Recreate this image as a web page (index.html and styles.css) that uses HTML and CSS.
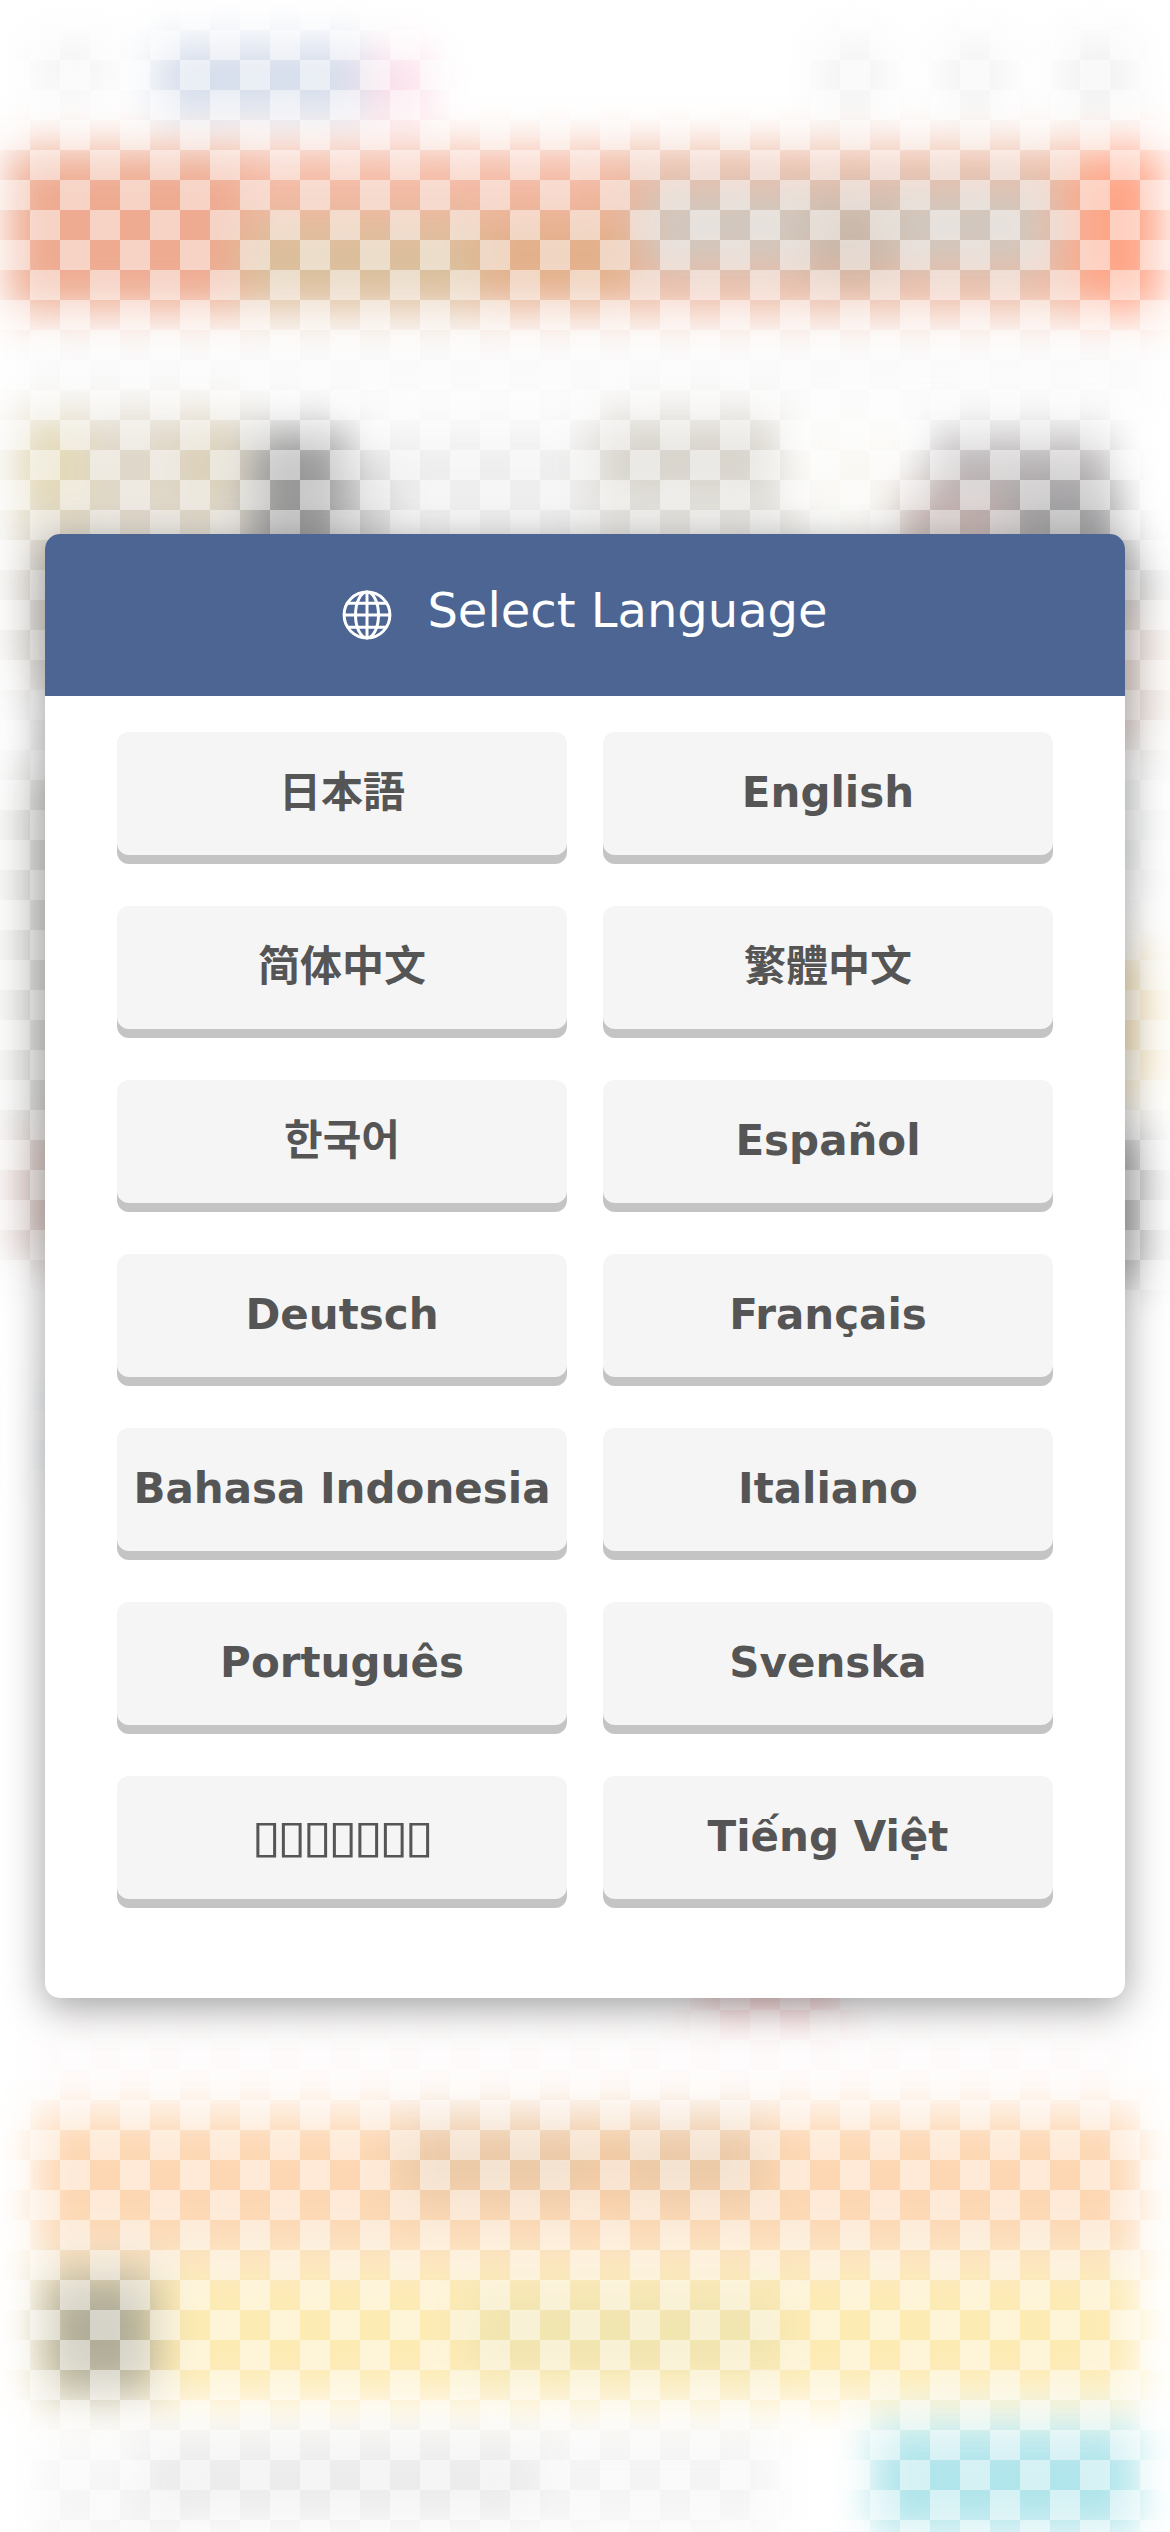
FILE: index.html
```html
<!DOCTYPE html>
<html lang="en">
<head>
<meta charset="utf-8">
<title>Select Language</title>
<link rel="stylesheet" href="styles.css">
</head>
<body>
<svg class="backdrop" viewBox="0 0 1170 2532" aria-hidden="true">
  <defs>
    <filter id="soft" filterUnits="userSpaceOnUse" x="-80" y="-80" width="1330" height="2692" color-interpolation-filters="sRGB"><feGaussianBlur stdDeviation="20 23"/></filter>
    <pattern id="check" width="60" height="60" patternUnits="userSpaceOnUse">
      <path d="M0 0h30v30H0zM30 30h30v30H30z" fill="#fff" fill-opacity=".47"/>
    </pattern>
  </defs>
  <rect width="1170" height="2532" fill="#fff"/>
  <g filter="url(#soft)">
    <!-- top bar -->
    <rect x="35" y="45" width="75" height="50" fill="#f2f2f2"/>
    <rect x="155" y="44" width="210" height="70" fill="#d3dbea"/>
    <rect x="365" y="54" width="65" height="62" fill="#fbdce8"/>
    <rect x="820" y="42" width="65" height="70" fill="#f2f2f2"/>
    <rect x="942" y="42" width="65" height="70" fill="#f2f2f2"/>
    <rect x="1062" y="42" width="70" height="70" fill="#f0f0f0"/>
    <!-- banner -->
    <rect x="8" y="148" width="1154" height="164" fill="#efb69d"/>
    <rect x="8" y="155" width="232" height="150" fill="#eeab91"/>
    <rect x="240" y="148" width="360" height="68" fill="#f4b9a4"/>
    <rect x="240" y="222" width="240" height="84" fill="#dabf9c"/>
    <rect x="480" y="218" width="150" height="78" fill="#e2b08a"/>
    <rect x="640" y="182" width="410" height="90" fill="#d1c8bf"/>
    <rect x="810" y="205" width="80" height="75" fill="#c9b7a8"/>
    <rect x="1080" y="148" width="80" height="164" fill="#ffa587"/>
    <rect x="20" y="340" width="1130" height="60" fill="#f9f9f9"/>
    <!-- heading row -->
    <rect x="15" y="415" width="230" height="135" fill="#dfd7c9"/>
    <rect x="25" y="425" width="60" height="85" fill="#e4dab6"/>
    <rect x="180" y="425" width="55" height="70" fill="#dbd0b6"/>
    <rect x="360" y="430" width="230" height="120" fill="#eee"/>
    <rect x="250" y="430" width="98" height="135" fill="#989898"/>
    <rect x="340" y="470" width="50" height="90" fill="#cfcfcf"/>
    <rect x="595" y="418" width="185" height="75" fill="#d7d3cb"/>
    <rect x="590" y="495" width="210" height="60" fill="#e4e3df"/>
    <rect x="810" y="430" width="90" height="100" fill="#f9f8f3"/>
    <rect x="930" y="435" width="180" height="70" fill="#b9b5b6"/>
    <rect x="900" y="490" width="110" height="65" fill="#c1afac"/>
    <rect x="1010" y="485" width="110" height="75" fill="#a09fa1"/>
    <!-- left edge -->
    <rect x="14" y="550" width="60" height="130" fill="#dcd8d2"/>
    <rect x="14" y="680" width="60" height="100" fill="#f2f2f2"/>
    <rect x="14" y="775" width="60" height="370" fill="#d6d6d3"/>
    <rect x="14" y="1135" width="60" height="125" fill="#d6c5c1"/>
    <rect x="44" y="1380" width="60" height="110" fill="#eef2f5"/>
    <!-- right edge -->
    <rect x="1090" y="555" width="62" height="55" fill="#cacaca"/>
    <rect x="1090" y="610" width="66" height="130" fill="#e4d6cf"/>
    <rect x="1090" y="740" width="60" height="150" fill="#eff0f0"/>
    <rect x="1090" y="950" width="62" height="145" fill="#f6e6c3"/>
    <rect x="1090" y="1130" width="55" height="150" fill="#acacac"/>
    <!-- lower rows -->
    <rect x="700" y="1970" width="140" height="40" fill="#f6c6ca"/>
    <rect x="40" y="2020" width="1090" height="70" fill="#fefafa"/>
    <rect x="36" y="2113" width="1102" height="130" fill="#fdd7b3"/>
    <rect x="400" y="2120" width="365" height="80" fill="#ebcaa8"/>
    <rect x="590" y="2120" width="40" height="80" fill="#f2caa2"/>
    <rect x="36" y="2243" width="1102" height="25" fill="#fae8cf"/>
    <rect x="36" y="2268" width="1102" height="132" fill="#fdebb4"/>
    <rect x="470" y="2295" width="310" height="75" fill="#f0e4b0"/>
    <rect x="46" y="2275" width="108" height="118" fill="#b1ad99"/>
    <rect x="40" y="2440" width="130" height="110" fill="#f6f6f6"/>
    <rect x="145" y="2435" width="390" height="88" fill="#ebebeb"/>
    <rect x="535" y="2430" width="240" height="100" fill="#f4f4f4"/>
    <rect x="872" y="2426" width="266" height="108" fill="#b0e5eb"/>
  </g>
  <rect width="1170" height="2532" fill="url(#check)"/>
</svg>
<main class="dialog">
  <header class="dialog-header">
    <svg class="globe" viewBox="0 0 50 50" fill="none" stroke="#fff" stroke-width="3" aria-hidden="true">
      <circle cx="25" cy="25" r="22.9"/>
      <ellipse cx="25" cy="25" rx="11.5" ry="22.9"/>
      <path d="M25 2v46M2 25h46M6 13.2h38M6 37.2h38"/>
    </svg>
    <h1 class="dialog-title">Select Language</h1>
  </header>
  <div class="languages">
    <button class="language" lang="ja">日本語</button>
    <button class="language">English</button>
    <button class="language" lang="zh-Hans">简体中文</button>
    <button class="language" lang="zh-Hant">繁體中文</button>
    <button class="language" lang="ko">한국어</button>
    <button class="language">Español</button>
    <button class="language">Deutsch</button>
    <button class="language">Français</button>
    <button class="language">Bahasa Indonesia</button>
    <button class="language">Italiano</button>
    <button class="language">Português</button>
    <button class="language">Svenska</button>
    <button class="language"><span class="boxes">▯▯▯▯▯▯▯</span></button>
    <button class="language">Tiếng Việt</button>
  </div>
</main>
</body>
</html>
```
FILE: styles.css
```css
* {
  box-sizing: border-box;
}

body {
  margin: 0;
  min-height: 2532px;
  display: flex;
  align-items: center;
  justify-content: center;
  overflow: hidden;
  font-family: "DejaVu Sans", "Noto Sans CJK JP", sans-serif;
}

.backdrop {
  position: absolute;
  top: 0;
  left: 0;
  width: 1170px;
  height: 2532px;
}

.dialog {
  position: relative;
  width: 1080px;
  height: 1464px;
  border-radius: 15px;
  overflow: hidden;
  background: #fff;
  box-shadow: 0 9px 40px rgba(0, 0, 0, 0.38);
}

.dialog-header {
  display: flex;
  justify-content: center;
  gap: 35px;
  height: 162px;
  padding-top: 48px;
  background: #4c6592;
  color: #fff;
}

.globe {
  width: 50px;
  height: 50px;
  margin-top: 8px;
}

.dialog-title {
  margin: 0;
  font-size: 48px;
  line-height: 56px;
  font-weight: 400;
}

.languages {
  display: grid;
  grid-template-columns: 450px 450px;
  justify-content: center;
  gap: 51px 36px;
  padding-top: 36px;
}

.language {
  height: 123px;
  padding: 0 0 3px;
  border: 0;
  border-radius: 12px;
  background: #f5f5f5;
  box-shadow: 0 9px 0 #c4c4c4;
  color: #555;
  font: inherit;
  font-size: 42px;
  font-weight: 700;
  line-height: 49px;
  white-space: nowrap;
}

.language:lang(zh-Hans) {
  font-family: "DejaVu Sans", "Noto Sans CJK SC", sans-serif;
}

.language:lang(zh-Hant) {
  font-family: "DejaVu Sans", "Noto Sans CJK TC", sans-serif;
}

.language:lang(ko) {
  font-family: "DejaVu Sans", "Noto Sans CJK KR", sans-serif;
}

.boxes {
  display: inline-block;
  margin-right: 2px;
  font-weight: 400;
  letter-spacing: -3.2px;
  transform: scale(1.28, 1.07);
}
```
